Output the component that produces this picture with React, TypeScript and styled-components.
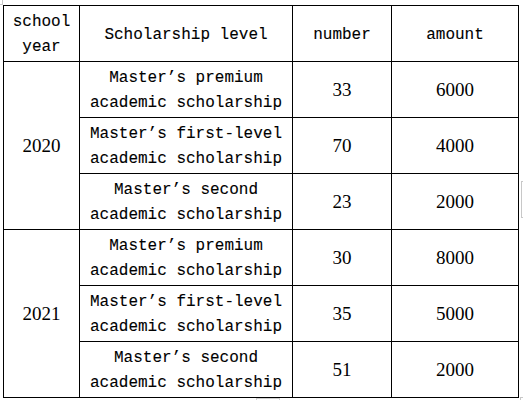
import React from "react";
import styled, { createGlobalStyle } from "styled-components";

const Global = createGlobalStyle`
  html, body { margin: 0; padding: 0; background: #ffffff; }
  body { width: 523px; height: 400px; overflow: hidden; }
`;

const Page = styled.div`
  position: relative;
  width: 523px;
  height: 400px;
  padding: 5px 0 0 3px;
  box-sizing: border-box;
`;

const Grid = styled.div`
  display: grid;
  grid-template-columns: 75px 212px 98px 126px;
  grid-auto-rows: 55px;
  gap: 1px;
  padding: 1px;
  width: 516px;
  box-sizing: border-box;
  background: #000000;
`;

const Cell = styled.div<{ $span?: number; $num?: boolean }>`
  background: #ffffff;
  display: flex;
  align-items: center;
  justify-content: center;
  text-align: center;
  box-sizing: border-box;
  padding-top: ${(p) => (p.$num ? "0" : "3px")};
  color: #000000;
  font-family: ${(p) =>
    p.$num ? '"Liberation Serif", "Times New Roman", serif' : '"Liberation Mono", "Courier New", monospace'};
  font-size: ${(p) => (p.$num ? "19px" : "16px")};
  line-height: 25px;
  white-space: pre-line;
  ${(p) => (p.$num ? "" : "-webkit-text-stroke: 0.1px #000;")}
  ${(p) => (p.$span ? `grid-row: span ${p.$span};` : "")}
`;

const Mark = styled.div<{ $x: number; $y: number; $w: number; $h: number; $sides: string }>`
  position: absolute;
  left: ${(p) => p.$x}px;
  top: ${(p) => p.$y}px;
  width: ${(p) => p.$w}px;
  height: ${(p) => p.$h}px;
  box-sizing: border-box;
  ${(p) => p.$sides}
`;

type Row = { level: string; number: string; amount: string };
const years: { year: string; rows: Row[] }[] = [
  {
    year: "2020",
    rows: [
      { level: "Master’s premium\nacademic scholarship", number: "33", amount: "6000" },
      { level: "Master’s first-level\nacademic scholarship", number: "70", amount: "4000" },
      { level: "Master’s second\nacademic scholarship", number: "23", amount: "2000" },
    ],
  },
  {
    year: "2021",
    rows: [
      { level: "Master’s premium\nacademic scholarship", number: "30", amount: "8000" },
      { level: "Master’s first-level\nacademic scholarship", number: "35", amount: "5000" },
      { level: "Master’s second\nacademic scholarship", number: "51", amount: "2000" },
    ],
  },
];

export default function App() {
  return (
    <>
      <Global />
      <Page>
        <Grid>
          <Cell>{"school\nyear"}</Cell>
          <Cell>Scholarship level</Cell>
          <Cell>number</Cell>
          <Cell>amount</Cell>
          {years.map((y) => (
            <React.Fragment key={y.year}>
              <Cell $num $span={y.rows.length} style={{ gridColumn: 1 }}>
                {y.year}
              </Cell>
              {y.rows.map((r, i) => (
                <React.Fragment key={i}>
                  <Cell>{r.level}</Cell>
                  <Cell $num>{r.number}</Cell>
                  <Cell $num>{r.amount}</Cell>
                </React.Fragment>
              ))}
            </React.Fragment>
          ))}
        </Grid>
        <Mark $x={0} $y={0} $w={3} $h={5} $sides="border-right: 1px solid #c8c8c8; border-bottom: 1px solid #c8c8c8;" />
        <Mark $x={521} $y={181} $w={2} $h={37} $sides="border-left: 1px solid #c8c8c8; border-top: 1px solid #c8c8c8; border-bottom: 1px solid #c8c8c8;" />
        <Mark $x={256} $y={398} $w={24} $h={2} $sides="border-top: 1px solid #d0d0d0; border-left: 1px solid #d0d0d0; border-right: 1px solid #d0d0d0;" />
        <Mark $x={520} $y={397} $w={3} $h={3} $sides="border-left: 1px solid #c8c8c8; border-top: 1px solid #c8c8c8;" />
      </Page>
    </>
  );
}
